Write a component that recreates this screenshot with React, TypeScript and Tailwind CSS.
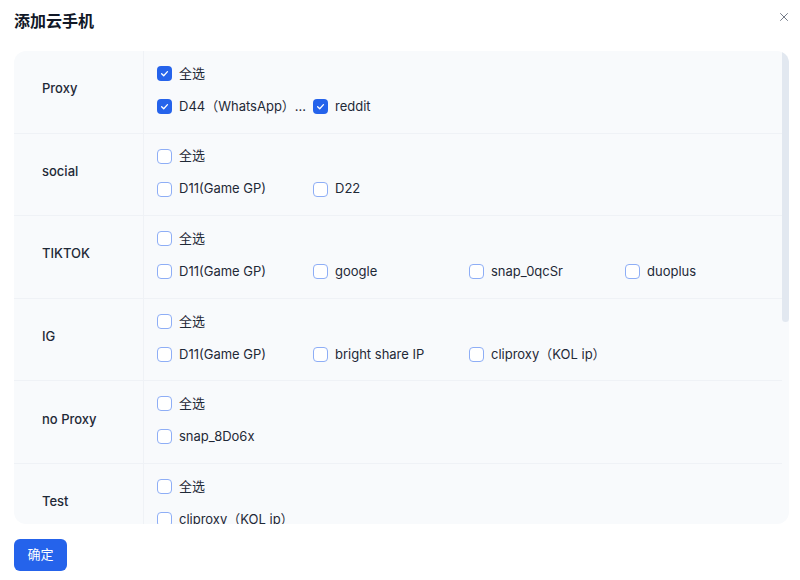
import { X } from 'lucide-react';

interface Group {
  name: string;
  all: boolean;
  items: { label: string; checked: boolean }[];
}

const groups: Group[] = [
  {
    name: 'Proxy',
    all: true,
    items: [
      { label: 'D44（WhatsApp）...', checked: true },
      { label: 'reddit', checked: true },
    ],
  },
  {
    name: 'social',
    all: false,
    items: [
      { label: 'D11(Game GP)', checked: false },
      { label: 'D22', checked: false },
    ],
  },
  {
    name: 'TIKTOK',
    all: false,
    items: [
      { label: 'D11(Game GP)', checked: false },
      { label: 'google', checked: false },
      { label: 'snap_0qcSr', checked: false },
      { label: 'duoplus', checked: false },
    ],
  },
  {
    name: 'IG',
    all: false,
    items: [
      { label: 'D11(Game GP)', checked: false },
      { label: 'bright share IP', checked: false },
      { label: 'cliproxy（KOL ip）', checked: false },
    ],
  },
  {
    name: 'no Proxy',
    all: false,
    items: [{ label: 'snap_8Do6x', checked: false }],
  },
  {
    name: 'Test',
    all: false,
    items: [{ label: 'cliproxy（KOL ip）', checked: false }],
  },
];

function Checkbox({ checked }: { checked: boolean }) {
  if (checked) {
    return (
      <span className="w-[15px] h-[15px] shrink-0 rounded-[4px] bg-[#2563eb] flex items-center justify-center">
        <svg width="11" height="11" viewBox="0 0 10 10" fill="none">
          <path d="M2.4 5.2 4.3 7 7.7 3.3" stroke="white" strokeWidth="1.2" strokeLinecap="round" strokeLinejoin="round" />
        </svg>
      </span>
    );
  }
  return <span className="w-[15px] h-[15px] shrink-0 rounded-[4px] border border-[#8eaef6] bg-white" />;
}

function Option({ label, checked }: { label: string; checked: boolean }) {
  return (
    <div className="w-[156px] flex items-center gap-[7px] h-5">
      <Checkbox checked={checked} />
      <span className="text-[13px] text-[#1f2937] whitespace-nowrap">{label}</span>
    </div>
  );
}

export default function App() {
  return (
    <div
      className="w-[800px] h-[580px] bg-white pl-[14px] pr-[11px] pt-[9px] overflow-hidden"
      style={{ fontFamily: 'Inter, "Noto Sans CJK SC", sans-serif' }}
    >
      {/* Header */}
      <div className="flex items-center justify-between h-6">
        <h1 className="text-[16px] font-bold text-[#111827]">添加云手机</h1>
        <button className="text-[#6b7280] -mt-[9px] -mr-[2px]">
          <X size={14} strokeWidth={1.6} />
        </button>
      </div>

      {/* Group list */}
      <div className="relative mt-[18px] h-[473px] rounded-xl bg-[#f8fafc] overflow-hidden">
        <div className="pr-[7px]">
          {groups.map((g) => (
            <div key={g.name} className="flex border-b border-[#eff2f6]">
              <div className="w-[129px] shrink-0 pl-[28px] pt-3">
                <div className="h-[52px] flex items-center text-[13px] font-medium text-[#1f2937]">{g.name}</div>
              </div>
              <div className="flex-1 border-l border-[#eff2f6] pl-[13px] pt-[12.5px] pb-[16.1px] flex flex-col gap-[13px]">
                <Option label="全选" checked={g.all} />
                <div className="flex">
                  {g.items.map((it, i) => (
                    <Option key={i} label={it.label} checked={it.checked} />
                  ))}
                </div>
              </div>
            </div>
          ))}
        </div>
        {/* scrollbar thumb */}
        <div className="absolute right-0 top-0 w-[7px] h-[271px] rounded-b-full bg-[#e2e8f0]" />
      </div>

      {/* Footer */}
      <div className="mt-[15px]">
        <button className="h-8 w-[53px] rounded-md bg-[#2563eb] text-white text-[13px]">确定</button>
      </div>
    </div>
  );
}
